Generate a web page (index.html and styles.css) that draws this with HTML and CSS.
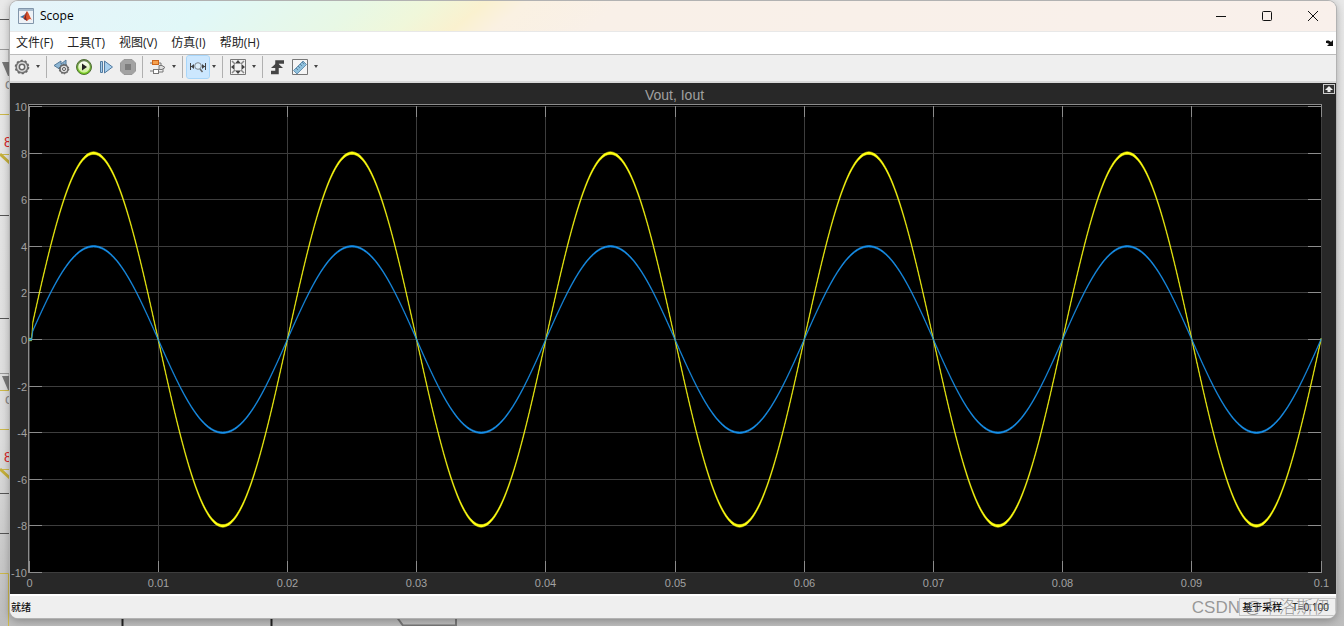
FILE: index.html
```
<!DOCTYPE html>
<html lang="zh-CN">
<head>
<meta charset="utf-8">
<title>Scope</title>
<link rel="stylesheet" href="styles.css">
</head>
<body>
<svg class="canvas" aria-hidden="true">
  <g fill="none" stroke="#555">
    <path d="M0 19.500H10M0 215.500H10M0 318.500H10M0 493.500H10M0 533.500H10"/>
    <path d="M0 49.500H9V64M0 373.500H9V388" stroke="#999"/>
    <path d="M0 114.500H10M0 154.500H10M0 390.500H10M0 429.500H10M0 469.500H10M0 573.500H8.500V626" stroke="#cdb94a"/>
    <path d="M0 154L12 165M0 469L12 480" stroke="#c5b03c" stroke-width="3"/>
    <path d="M122.500 616V626M271.500 616V626" stroke="#222" stroke-width="2"/>
    <path d="M396 616L403 625.500H456V616" stroke="#777" stroke-width="2"/>
  </g>
  <path d="M2 62H12V76H8ZM2 376H12V390H8Z" fill="#777"/>
  <g class="canvas-text"><text x="5" y="89" fill="#888">o</text><text x="5" y="404" fill="#888">o</text><text x="4" y="147" fill="#d81f2a">8</text><text x="4" y="462" fill="#d81f2a">8</text></g>
</svg>
<main class="window">
  <header class="titlebar">
    <svg class="logo" width="16" height="16" viewBox="0 0 16 16"><path d="M.5.500H15.500V15.500H.500Z" fill="#eef2f6" stroke="#8296ab"/><path d="M1 1H15V3H1Z" fill="#a9bccd"/><path d="M2 9L6 7L9 4L7 12L5 10Z" fill="#2e71a8"/><path d="M5 10L9 3C11 5 12 10 14 12C12 10 11 11 9 13L7 11Z" fill="#d9532c"/><path d="M9 3L8 9L9 13C7 12 7 11 6 11Z" fill="#7d2424"/></svg>
    <h1>Scope</h1>
    <button class="caption" aria-label="Minimize"><svg width="12" height="12"><path d="M1 6.500H11"/></svg></button>
    <button class="caption" aria-label="Maximize"><svg width="12" height="12"><rect x="1.500" y="1.500" width="9" height="9" rx="1"/></svg></button>
    <button class="caption" aria-label="Close"><svg width="12" height="12"><path d="M1 1L11 11M11 1L1 11"/></svg></button>
  </header>
  <nav class="menu">
    <button>文件(F)</button><button>工具(T)</button><button>视图(V)</button><button>仿真(I)</button><button>帮助(H)</button>
    <button class="dock" aria-label="Dock"><svg width="8" height="8"><path d="M0 2C2 1 4 2 5 3L7 1V7H1L3 5C2 4 1 4 0 4Z" fill="#111"/></svg></button>
  </nav>
  <div class="toolbar">
    <button class="tool" aria-label="Settings"><svg width="18" height="18" viewBox="0 0 18 18"><circle cx="9" cy="9" r="5.800" fill="#ddd" stroke="#777" stroke-width="1.500"/><circle cx="9" cy="9" r="6.600" fill="none" stroke="#666" stroke-width="1.400" stroke-dasharray="2.200 2"/><circle cx="9" cy="9" r="2.700" fill="#f8f8f8" stroke="#666" stroke-width="1.500"/></svg></button>
    <button class="caret" aria-label="Settings options"></button>
    <i class="sep"></i>
    <button class="tool" aria-label="Step back options"><svg width="18" height="18" viewBox="0 0 18 18"><path d="M1 7.500L8 3V6L13 2V8L8 11V12Z" fill="#8db6d4" stroke="#557b9a"/><circle cx="11" cy="11" r="4" fill="#ddd" stroke="#666" stroke-width="1.500"/><circle cx="11" cy="11" r="4.800" fill="none" stroke="#555" stroke-dasharray="1.500 1.500"/><circle cx="11" cy="11" r="1.500" fill="#fff" stroke="#555"/></svg></button>
    <button class="tool" aria-label="Run"><svg width="18" height="18" viewBox="0 0 18 18"><defs><linearGradient id="run" x2="0" y2="1"><stop stop-color="#6b7f58"/><stop offset="1" stop-color="#78d51b"/></linearGradient><linearGradient id="face" x2="0" y2="1"><stop stop-color="#fff"/><stop offset="1" stop-color="#c9ef8e"/></linearGradient></defs><circle cx="9" cy="9" r="7.500" fill="url(#run)" stroke="#4f6f35"/><circle cx="9" cy="9" r="5.800" fill="url(#face)"/><path d="M7 5.500L12 9L7 12.500Z" fill="#222"/></svg></button>
    <button class="tool" aria-label="Step forward"><svg width="18" height="18" viewBox="0 0 18 18"><path d="M3.500 3.500H5.500V14.500H3.500ZM7.500 3L15.500 9L7.500 15Z" fill="#a7cfee" stroke="#527a9f"/></svg></button>
    <button class="tool" aria-label="Stop" disabled><svg width="18" height="18" viewBox="0 0 18 18"><path d="M5 1.500H13L16.500 5V13L13 16.500H5L1.500 13V5Z" fill="#a3a3a3" stroke="#999"/><path d="M6 6H12V12H6Z" fill="#7d7d7d"/></svg></button>
    <i class="sep"></i>
    <button class="tool" aria-label="Signal selection"><svg width="18" height="18" viewBox="0 0 18 18"><path d="M1 5H12V9M1 13H5M10 14H14V10" fill="none" stroke="#777"/><rect x="3.500" y="2.500" width="6" height="4" fill="#f6a14d" stroke="#cc661d"/><rect x="4.500" y="11.500" width="5" height="4" fill="#fff" stroke="#777"/><path d="M10 7.500H13L16 9.500L13 11.500H10Z" fill="#ddd" stroke="#777"/></svg></button>
    <button class="caret" aria-label="Signal options"></button>
    <i class="sep"></i>
    <button class="tool active" aria-label="Zoom X" aria-pressed="true"><svg width="18" height="18" viewBox="0 0 18 18"><path d="M1.500 5V12M16.500 5V12M2 8.500H5M13 8.500H16" fill="none" stroke="#444"/><path d="M2 8.500L5 6V11ZM16 8.500L13 6V11Z" fill="#444"/><circle cx="9" cy="8" r="3.300" fill="#dceefa" stroke="#7d858c"/><path d="M11 11L13.500 14" stroke="#666" stroke-width="1.500"/></svg></button>
    <button class="caret" aria-label="Zoom options"></button>
    <i class="sep"></i>
    <button class="tool" aria-label="Scale axes"><svg width="18" height="18" viewBox="0 0 18 18"><path d="M1.500 1.500H16.500V16.500H1.500Z" fill="#f2f2f2" stroke="#777"/><path d="M9 2L12 5.500H6ZM9 16L6 12.500H12ZM2 9L5.500 6V12ZM16 9L12.500 6V12Z" fill="#444"/><path d="M3 3L6 6M15 3L12 6M3 15L6 12M15 15L12 12" stroke="#888" stroke-width="1.500"/></svg></button>
    <button class="caret" aria-label="Scale options"></button>
    <i class="sep"></i>
    <button class="tool" aria-label="Trigger"><svg width="18" height="18" viewBox="0 0 18 18"><path d="M2 14.500H8V4H15" fill="none" stroke="#444" stroke-width="3.500"/><path d="M2 10L8 4.500L14 10Z" fill="#444"/></svg></button>
    <button class="tool" aria-label="Cursor measurements"><svg width="18" height="18" viewBox="0 0 18 18"><path d="M1.500 1.500H16.500V16.500H1.500Z" fill="#f5f5f5" stroke="#777"/><path d="M2.500 12.500L12 3L15.500 6.500L6 16Z" fill="#8fc0dc" stroke="#6a93b0"/><path d="M5 10L7 12M7 8L9 10M9 6L11 8M11 4L13 6" stroke="#5b86a5"/></svg></button>
    <button class="caret" aria-label="Measurement options"></button>
  </div>
  <section class="scope">
    <h2>Vout, Iout</h2>
    <button class="maximize-axes" aria-label="Maximize axes"><svg width="12" height="10"><rect x=".5" y=".5" width="11" height="9" fill="#333" stroke="#ccc"/><path d="M6 2L10 6H7.500V8H4.500V6H2Z" fill="#eee"/></svg></button>
    <svg class="plot" id="plot" role="img" aria-label="Vout, Iout"></svg>
  </section>
  <footer class="status"><span>就绪</span><span class="sample"><span>基于采样</span><span>T=0.100</span></span></footer>
</main>
<div class="watermark">CSDN @卡洛斯伊</div>
<script src="plot.js"></script>
</body>
</html>
```
FILE: styles.css
```
* { box-sizing: border-box; }
body {
  margin: 0;
  height: 100vh;
  padding: 1px 8px 8px 10px;
  overflow: hidden;
  display: flex;
  background: linear-gradient(#e9e9e9, #dedede 70%, #bdbdbd);
  font-family: "Open Sans", "Noto Sans CJK SC", sans-serif;
}
button { border: 0; padding: 0; background: none; font: inherit; color: inherit; }
.canvas { position: absolute; top: 0; left: 0; width: 100%; height: 100%; }
.canvas-text { font: 14px "Liberation Sans", sans-serif; }
.window {
  position: relative;
  flex: 1;
  min-width: 0;
  display: flex;
  flex-direction: column;
  overflow: hidden;
  border-radius: 8px;
  background: #efefef;
  box-shadow: 0 0 0 1px #b2b2b2, 0 2px 10px #0005;
}
.titlebar {
  flex: 0 0 30px;
  display: flex;
  align-items: center;
  padding-left: 8px;
  background: linear-gradient(140deg, #e6f3fa, #e1f8f8 15%, #e8f8e5 26%, #f0f7da 31%, #faf1cf 35%, #faf1e2 38%, #f9f0e8 45%, #f9f0eb);
}
.titlebar h1 { flex: 1; margin: 0 0 0 6px; font-size: 12px; font-weight: 400; line-height: 16px; }
.caption { width: 46px; height: 30px; display: grid; place-items: center; }
.caption svg { fill: none; stroke: #111; }
.menu {
  flex: 0 0 24px;
  display: flex;
  align-items: center;
  gap: 14px;
  padding: 0 2px 0 6px;
  background: #fff;
  border-top: 1px solid #e8e8e8;
  border-bottom: 1px solid #bcbcbc;
  font-size: 12px;
  line-height: 20px;
  color: #222;
}
.dock { margin-left: auto; display: grid; }
.toolbar {
  flex: 0 0 28px;
  display: flex;
  align-items: center;
  padding: 0 1px 3px;
  background: #efefef;
  border-bottom: 2px solid #d8d8d8;
}
.tool { width: 22px; height: 22px; display: grid; place-items: center; }
.active { background: #cce7fe; border-radius: 2px; outline: 1px solid #a8d6fa; }
.caret { width: 10px; height: 22px; display: grid; place-items: center; }
.caret::after { content: ""; border: 2px solid transparent; border-top: 3px solid #444; border-bottom: 0; }
.sep { width: 1px; height: 22px; margin: 0 4px 0 3px; background: #b0b0b0; }
.scope { position: relative; flex: 1; min-height: 0; display: flex; flex-direction: column; background: #282828; }
.scope h2 {
  margin: 0;
  padding: 4px 0 0 3px;
  height: 21px;
  font: 400 14px/16px "Liberation Sans", sans-serif;
  text-align: center;
  color: #a0a0a0;
}
.maximize-axes { position: absolute; top: 1px; right: 1px; display: grid; }
.plot { display: block; flex: 1; min-height: 0; width: 100%; overflow: visible; font: 11px "Liberation Sans", sans-serif; }
.plot text { fill: #a2a2a2; }
.grid { stroke: #3d3d3d; fill: none; }
.tick { stroke: #8c8c8c; fill: none; }
.frame { stroke: #8c8c8c; fill: #000; }
.vout { fill: #ffff12; stroke: #ffff12; stroke-width: 0.5px; }
.iout { fill: #1993ee; stroke: #1993ee; stroke-width: 0.5px; }
.status {
  flex: 0 0 24px;
  display: flex;
  justify-content: space-between;
  align-items: stretch;
  border-top: 2px solid #fff;
  background: #efefef;
  padding-left: 1px;
  font-size: 10px;
  font-weight: 500;
  line-height: 22px;
  color: #111;
}
.sample { display: flex; gap: 10px; border: 1px solid #c4c4c4; padding: 0 6px 0 2px; line-height: 16px; margin: 2px 0; }
.watermark {
  position: absolute;
  right: 14px;
  bottom: 6px;
  font: 17px/24px "Liberation Sans", "Noto Sans CJK SC", sans-serif;
  font-weight: 300;
  color: #777b;
}
```
FILE: plot.js
```
const svg = document.getElementById("plot");

function draw() {
  const width = svg.clientWidth;
  const height = svg.clientHeight;
  const left = 19, right = width - 15, top = 2, bottom = height - 22;
  const px = t => left + (right - left) * t / 0.1;
  const py = v => top + 0.5 + (bottom - top) * (10 - v) / 20;
  const snap = n => Math.floor(n) + 0.5;
  let grid = "", ticks = "", labels = "";

  for (let i = 0; i <= 10; i++) {
    const x = snap(px(i / 100));
    const y = snap(py(10 - i * 2));
    grid += `M${x} ${top}V${bottom}M${left} ${y}H${right}`;
    ticks += `M${x} ${top}v11M${x} ${bottom}v-11M${left} ${y}h13M${right} ${y}h-13`;
    labels += `<text x="${x}" y="${bottom + 15}" text-anchor="middle">${i / 100}</text>`;
    labels += `<text x="${left - 2}" y="${y + 4}" text-anchor="end">${10 - i * 2}</text>`;
  }

  const band = (amp, half) => {
    const upper = [], lower = [];
    for (let t = 0; t <= 0.100001; t += 0.0001) {
      const delay = t < 0.00025 ? 0 : 1;
      const y = py(amp * delay * Math.sin(100 * Math.PI * t));
      upper.push(`${px(t).toFixed(2)},${(y - half).toFixed(2)}`);
      lower.unshift(`${px(t).toFixed(2)},${(y + half).toFixed(2)}`);
    }
    return upper.concat(lower).join(" ");
  };

  svg.innerHTML = `
    <rect class="frame" x="${left - 0.5}" y="0.5" width="${right - left + 1}" height="${bottom}"/>
    <path class="grid" d="${grid}"/><path class="tick" d="${ticks}"/>
    <polygon class="vout" points="${band(8, 1.3)}"/>
    <polygon class="iout" points="${band(4, 0.8)}"/>${labels}`;
}

draw();
window.addEventListener("resize", draw);
```
